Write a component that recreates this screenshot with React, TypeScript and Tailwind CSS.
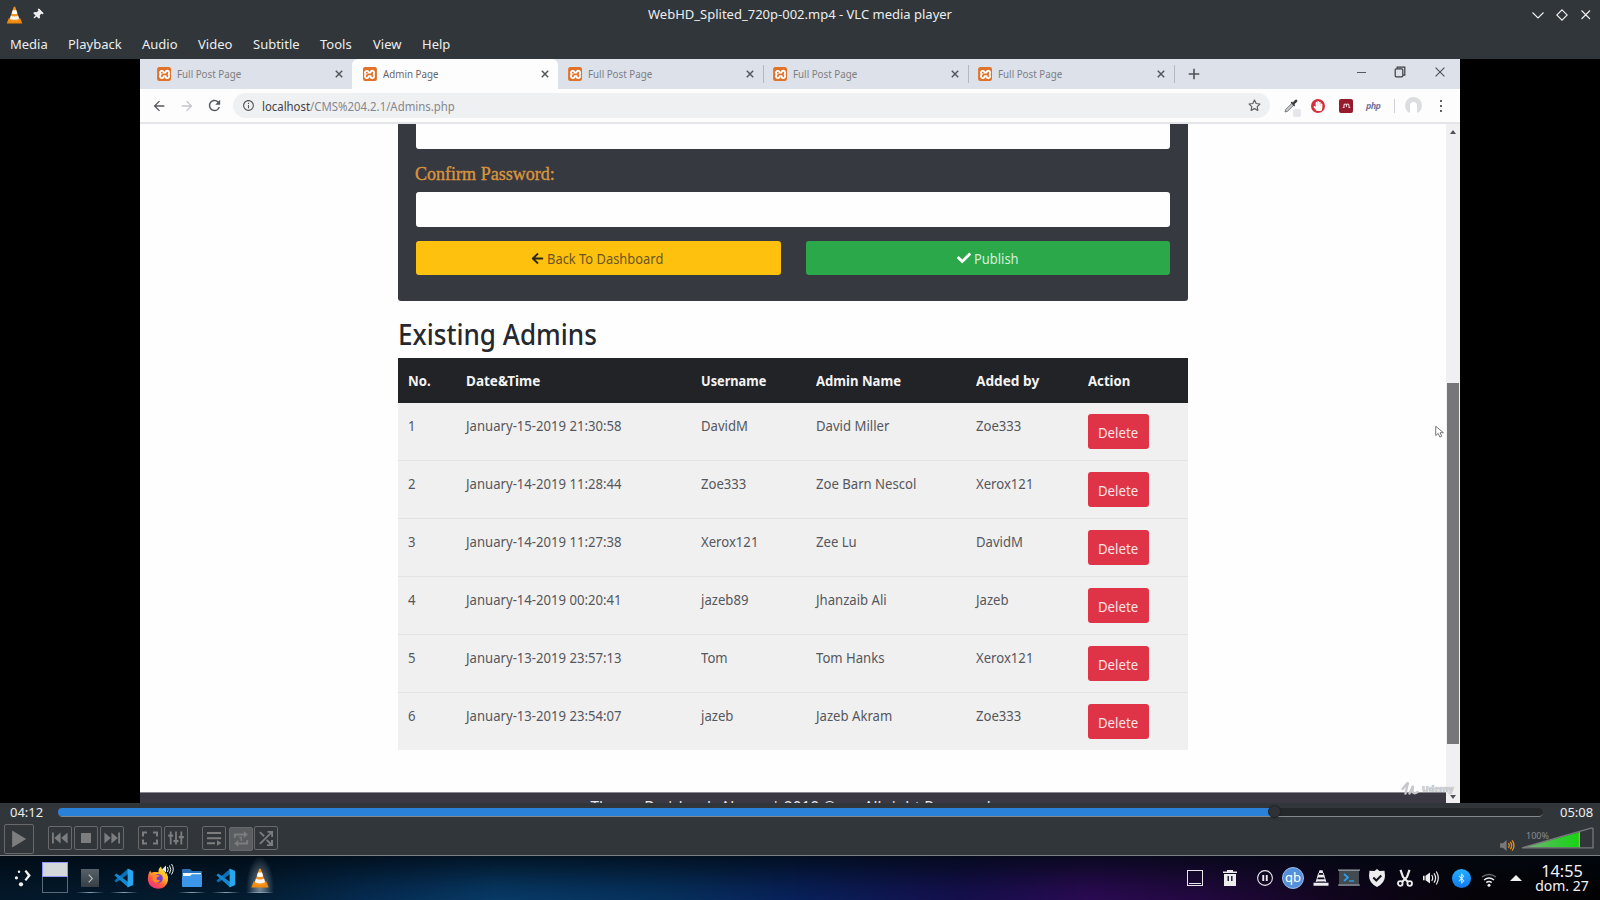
import type { ReactNode } from "react";
import { SiXampp } from "react-icons/si";
import { FaArrowLeft, FaCheck, FaThumbtack, FaBluetoothB, FaHandPaper } from "react-icons/fa";
import { FiStar } from "react-icons/fi";
import { MdRefresh, MdArrowBack, MdArrowForward, MdInfoOutline } from "react-icons/md";

const MENUS = [
  { label: "Media", cls: "w-[58px]" },
  { label: "Playback", cls: "w-[74px]" },
  { label: "Audio", cls: "w-[56px]" },
  { label: "Video", cls: "w-[55px]" },
  { label: "Subtitle", cls: "w-[67px]" },
  { label: "Tools", cls: "w-[53px]" },
  { label: "View", cls: "w-[49px]" },
  { label: "Help", cls: "w-[40px]" },
];

const HEADERS = [
  { label: "No.", cls: "scale-x-[0.94]" },
  { label: "Date&Time", cls: "scale-x-[0.965]" },
  { label: "Username", cls: "scale-x-[0.91]" },
  { label: "Admin Name", cls: "scale-x-[0.935]" },
  { label: "Added by", cls: "scale-x-[0.975]" },
  { label: "Action", cls: "scale-x-[0.94]" },
];

const ROWS = [
  ["1", "January-15-2019 21:30:58", "DavidM", "David Miller", "Zoe333"],
  ["2", "January-14-2019 11:28:44", "Zoe333", "Zoe Barn Nescol", "Xerox121"],
  ["3", "January-14-2019 11:27:38", "Xerox121", "Zee Lu", "DavidM"],
  ["4", "January-14-2019 00:20:41", "jazeb89", "Jhanzaib Ali", "Jazeb"],
  ["5", "January-13-2019 23:57:13", "Tom", "Tom Hanks", "Xerox121"],
  ["6", "January-13-2019 23:54:07", "jazeb", "Jazeb Akram", "Zoe333"],
];

const GRID = "grid grid-cols-[58px_235px_115px_160px_112px_1fr] pl-[9.5px]";

function Cone({ className }: { className: string }) {
  return (
    <svg viewBox="0 0 18 20" className={className}>
      <path d="M2.6 13.5h12.8L17.6 19.5H.4z" fill="#f08a0c" />
      <path d="M8.2.8h1.6l5 15.4c-2.2 1.8-9.4 1.8-11.6 0z" fill="#f7931e" />
      <path d="M7 4.6h4l1.2 3.6c-1.4 1-5 1-6.4 0z" fill="#fff" />
      <path d="M5 10.6c1.8 1.3 6.2 1.3 8 0l1.1 3.5c-2.2 1.7-8 1.7-10.2 0z" fill="#f4f4f4" />
    </svg>
  );
}

function VsCode() {
  return (
    <svg viewBox="0 0 20 20" className="size-[20px]">
      <path d="M.4 12.600L14 .8v5.400L2.200 14.600z" fill="#0b70b8" />
      <path d="M.4 7.200L2.200 5.400 14 13.800v5.400z" fill="#1488d0" />
      <path d="M13.600.5L19.200 3v14l-5.600 2.500z" fill="#2aa6ee" />
    </svg>
  );
}

function Firefox() {
  return (
    <svg viewBox="0 0 22 23" className="h-[23px] w-[22px]">
      <defs>
        <linearGradient id="fx" x1="0.850" y1="0.050" x2="0.250" y2="1">
          <stop offset="0" stopColor="#ffe93c" />
          <stop offset="0.400" stopColor="#ffb01f" />
          <stop offset="0.700" stopColor="#ff5540" />
          <stop offset="1" stopColor="#ea2f8e" />
        </linearGradient>
      </defs>
      <path
        d="M3.200 4.500Q3.500 6 4.600 6.800 6.200 5.600 8 6 9.800 6 11.600 6.200 11 2.800 14 .5 14.300 3.500 17 5q1.200 1 1.800 3l.6-1.500q2.200 4 1.500 8.500-1.800 7.500-10 7.700Q2.200 22.200.9 14.500.400 9 3.200 4.500z"
        fill="url(#fx)"
      />
      <circle cx="11.200" cy="12.500" r="4.600" fill="#7a3fd0" />
      <path d="M5.500 11.500q1.500-3 4.500-2.600 2.500 0 2.800 1-3 .6-3.600 2.400.600 2.600 4 1.700-1 3-4.200 2.700-3.400-.700-3.500-5.200z" fill="#ff8a2a" />
    </svg>
  );
}

function Favicon() {
  return (
    <span className="flex size-[14px] items-center justify-center overflow-hidden rounded-[2px] bg-white">
      <SiXampp className="size-[15px] shrink-0 text-[#e0732c]" />
    </span>
  );
}

function TabX() {
  return (
    <svg viewBox="0 0 8 8" className="size-[8px]">
      <path d="M.8.8l6.4 6.4M7.2.8L.8 7.2" stroke="#54575c" strokeWidth="1.5" />
    </svg>
  );
}

function Tab({ title, active, width, sep }: { title: string; active?: boolean; width: string; sep?: boolean }) {
  return (
    <div className={`flex h-[30px] shrink-0 items-center ${width} ${active ? "rounded-t-[6px] bg-[#fdfdfe]" : ""}`}>
      <Favicon />
      <span className={`ml-[6px] origin-left scale-x-[0.85] whitespace-nowrap text-[11.5px] ${active ? "text-[#65666b]" : "text-[#7c7e85]"}`}>
        {title}
      </span>
      <span className="ml-auto">
        <TabX />
      </span>
      <span className={`h-[18px] w-px ${sep ? "ml-[9px] bg-[#b4b8bf]" : "ml-[8px] bg-transparent"}`} />
    </div>
  );
}

function ChromeTabs() {
  return (
    <div className="flex h-[30px] items-center bg-[#dde1e9]">
      <Tab title="Full Post Page" width="w-[212px] pl-[17px]" />
      <Tab title="Admin Page" active width="w-[206px] pl-[10.5px]" />
      <Tab title="Full Post Page" sep width="w-[206px] pl-[10px]" />
      <Tab title="Full Post Page" sep width="w-[205px] pl-[9px]" />
      <Tab title="Full Post Page" sep width="w-[205.5px] pl-[9px]" />
      <svg viewBox="0 0 12 12" className="ml-[13px] size-[12px]">
        <path d="M6 .7v10.6M.7 6h10.6" stroke="#505357" strokeWidth="1.6" />
      </svg>
      <div className="mb-[4px] ml-auto flex items-center pr-[15px]">
        <span className="h-px w-[9px] bg-[#55585c]" />
        <svg viewBox="0 0 12 12" className="ml-[28px] size-[12px]" fill="none" stroke="#3b3d41" strokeWidth="1.2">
          <rect x="1.2" y="2.8" width="7.6" height="8" rx="1" />
          <path d="M3.2 2.6V1.2h7.6v8H9" />
        </svg>
        <svg viewBox="0 0 10 10" className="ml-[29px] size-[10px]">
          <path d="M.6.6l8.8 8.8M9.4.6L.6 9.4" stroke="#515458" strokeWidth="1.2" />
        </svg>
      </div>
    </div>
  );
}

function AddressBar() {
  return (
    <div className="flex h-[35px] items-center border-b-2 border-[#e4e5e8] bg-[#fdfdfe]">
      <MdArrowBack className="ml-[11px] size-[16px] text-[#55585c]" />
      <MdArrowForward className="ml-[12px] size-[16px] text-[#c2c4c8]" />
      <MdRefresh className="ml-[11px] size-[17px] text-[#55585c]" />
      <div className="ml-[10px] flex h-[25px] w-[1037px] items-center rounded-full bg-[#eff0f2] pl-[9px] pr-[9px]">
        <MdInfoOutline className="size-[13px] text-[#55585c]" />
        <span className="ml-[7px] mt-[2px] origin-left scale-x-[0.875] whitespace-nowrap text-[13px] text-[#85878c]">
          <span className="text-[#3f4145]">localhost</span>/CMS%204.2.1/Admins.php
        </span>
        <FiStar className="ml-auto size-[13px] text-[#606266]" strokeWidth={2.2} />
      </div>
      <div className="relative ml-[14px] mr-px flex">
        <svg viewBox="0 0 14 14" className="size-[14px]">
          <path d="M1 13l.8-2.600L8 4.200 9.800 6 3.600 12.200z" fill="#c9cbcd" stroke="#77797c" strokeWidth="1" />
          <path d="M6.600 3.600L8 2.600l.8.800L11 .9q1.500-.9 2.200.300.600 1-.4 1.900L10.400 5.300l.8.800-1 1.300z" fill="#3c3e41" />
        </svg>
        <span className="absolute left-[9px] top-[10px] size-[8px] rounded-[2px] bg-[#e4e6e9]" />
      </div>
      <span className="ml-[12px] flex size-[14px] items-center justify-center rounded-full bg-[#d4303c]">
        <FaHandPaper className="size-[10px] text-white" />
      </span>
      <span className="ml-[14px] flex size-[14px] items-center justify-center rounded-[2px] bg-[#961b2e]">
        <svg viewBox="0 0 10 6" className="h-[5px] w-[9px]" fill="none" stroke="#f3d9dd" strokeWidth="1.3">
          <path d="M.500 5.500h1.500V3q0-1.800 1.500-1.800T5 3v1.500V3q0-1.800 1.500-1.800T8 3v2.500h1.500" />
        </svg>
      </span>
      <span className="ml-[13px] w-[15px] text-[9px] font-bold italic tracking-[-0.6px] text-[#77749c]">php</span>
      <span className="ml-[13px] h-[14px] w-px bg-[#cfd1d5]" />
      <span className="ml-[10px] flex size-[17px] items-end justify-center rounded-full bg-[#dcdde0]">
        <span className="h-[12px] w-[7px] rounded-t-full bg-white" />
      </span>
      <span className="ml-[18px] flex flex-col gap-[3px]">
        <span className="size-[2px] bg-[#606266]" />
        <span className="size-[2px] bg-[#606266]" />
        <span className="size-[2px] bg-[#606266]" />
      </span>
    </div>
  );
}

function FormCard() {
  return (
    <div className="h-[177px] rounded-b-[3px] bg-[#373941] pl-[17.5px] pr-[18.5px]">
      <div className="h-[25px] rounded-b-[3px] bg-[#fefefe]" />
      <div className="flex h-[43px] items-center pt-[8px] font-['Liberation_Serif',serif] text-[18.5px] font-normal text-[#d8953c] [-webkit-text-stroke:0.4px_#d8953c]">
        <span className="ml-[-0.5px] origin-left scale-x-[0.975] whitespace-nowrap">Confirm Password:</span>
      </div>
      <div className="h-[35px] rounded-[3px] bg-[#fefefe]" />
      <div className="mt-[14px] flex gap-[25px] text-[14.5px]">
        <div className="flex h-[34px] flex-1 items-center justify-center gap-[3px] rounded-[3px] bg-[#fec10d] pr-[2px] text-[#6b5524]">
          <FaArrowLeft className="size-[13px] text-[#2a2718]" />
          <span className="mt-[2px] w-[116px] origin-left scale-x-[0.89] whitespace-nowrap">Back To Dashboard</span>
        </div>
        <div className="flex h-[34px] flex-1 items-center justify-center gap-[3px] rounded-[3px] bg-[#2aa84a] text-[#d5f0db]">
          <FaCheck className="size-[14px] text-white" />
          <span className="mt-[2px] w-[44px] origin-left scale-x-[0.89] whitespace-nowrap">Publish</span>
        </div>
      </div>
    </div>
  );
}

function AdminTable() {
  return (
    <div>
      <div className={`${GRID} h-[45px] items-center bg-[#212327] text-[14px] font-bold text-[#f3f3f4]`}>
        {HEADERS.map((h) => (
          <span key={h.label} className={`origin-left whitespace-nowrap ${h.cls}`}>
            {h.label}
          </span>
        ))}
      </div>
      {ROWS.map((r) => (
        <div
          key={r[0]}
          className={`${GRID} h-[58px] items-start border-b border-[#e2e3e5] bg-[#f0f0f1] pt-[11px] text-[14.500px] leading-[22px] text-[#55575c] last:h-[57px] last:border-transparent`}
        >
          {r.map((c, i) => (
            <span key={i} className="origin-left scale-x-[0.905] whitespace-nowrap">
              {c}
            </span>
          ))}
          <span className="flex h-[35px] w-[61px] items-center justify-center rounded-[3px] bg-[#df3447] text-[#fde3e6]">
            <span className="scale-x-[0.91]">Delete</span>
          </span>
        </div>
      ))}
    </div>
  );
}

function VideoFrame() {
  return (
    <div className="flex h-[744px] justify-center overflow-hidden bg-black">
      <div className="relative flex w-[1320px] flex-col overflow-hidden bg-[#fefefe]">
        <ChromeTabs />
        <AddressBar />
        <div className="flex min-h-0 flex-1">
          <div className="flex flex-1 flex-col">
            <div className="ml-[258px] w-[790px]">
              <FormCard />
              <h1 className="flex h-[57px] items-center pt-[9px] text-[28px] font-medium text-[#26282d]">
                <span className="ml-[-0.5px] origin-left scale-x-[0.932] whitespace-nowrap">Existing Admins</span>
              </h1>
              <AdminTable />
            </div>
            <div className="mt-auto flex h-[11px] justify-center overflow-hidden border-t border-[#888890] bg-[#3a3842] text-[16px] leading-[22px] text-[#e8e8ec]">
              <span className="mt-[3px] scale-x-[0.96] whitespace-nowrap">Theme By | Jazeb Akram | 2019 © ---- All right Reserved.</span>
            </div>
          </div>
          <div className="flex w-[14px] flex-col items-center bg-[#f0f0f2]">
            <span className="mt-[6px] border-x-[3px] border-b-[4px] border-x-transparent border-b-[#505256]" />
            <span className="mt-[249px] h-[361px] w-[12px] bg-[#77777a]" />
            <span className="mb-[4px] mt-auto border-x-[3px] border-t-[4px] border-x-transparent border-t-[#505256]" />
          </div>
        </div>
        <svg viewBox="0 0 14 18" className="absolute left-[1295px] top-[366px] h-[14px] w-[10px]">
          <path d="M1 1v13l3.400-3 2.400 5 2.600-1.200-2.300-4.800h4.700z" fill="#fff" stroke="#6a6b6f" strokeWidth="1.300" />
        </svg>
        <div className="absolute left-[1261px] top-[720px] flex items-center gap-[3px] text-[9.500px] font-bold leading-[16px] text-[#d9d9dc] [text-shadow:0_0_1px_#77777c]">
          <svg viewBox="0 0 18 14" className="h-[14px] w-[18px]" fill="none" stroke="#c8c8cc" strokeWidth="2.400" strokeLinecap="round">
            <path d="M1.500 8L7 1.500 4.500 12.500M8.500 12.500L12 5l-.500 6q1.500 2.500 5 0" />
          </svg>
          <span className="mt-[2px] origin-left scale-x-[0.94]">Udemy</span>
        </div>
      </div>
    </div>
  );
}

function Ctl({ children, cls = "", big }: { children: ReactNode; cls?: string; big?: boolean }) {
  return (
    <span className={`flex items-center justify-center rounded-[2px] border border-[#67696b] text-[#7b7d7e] ${big ? "size-[30px]" : "size-[24px]"} ${cls}`}>
      <svg viewBox="0 0 16 16" className={big ? "size-[20px]" : "size-[16px]"} fill="currentColor">
        {children}
      </svg>
    </span>
  );
}

function Player() {
  return (
    <div className="flex h-[53px] flex-col border-b border-[#7b8083] bg-[#31363a]">
      <div className="flex h-[18px] items-center">
        <span className="w-[58px] pl-[10px] text-[13px] leading-none text-[#eceeef]">04:12</span>
        <div className="relative h-[9px] w-[1485px] rounded-full border-b border-[#85898b] bg-[#25282b]">
          <div className="h-[8px] w-[1217px] rounded-l-full bg-[#2a82d8]" />
          <span className="absolute left-[1210px] top-[-3px] size-[13px] rounded-full border border-[#202326] bg-[#2e3236] shadow" />
        </div>
        <span className="ml-[17px] text-[13px] leading-none text-[#eceeef]">05:08</span>
      </div>
      <div className="flex h-[34px] items-center pl-[4px]">
        <Ctl big cls="mt-[2px]">
          <path d="M2.500 1.200v13.600L13.800 8z" />
        </Ctl>
        <Ctl cls="ml-[14px]">
          <path d="M0 2.500h1.800v11H0zM8.600 2.500v11L2.200 8zM15.600 2.500v11L9.200 8z" />
        </Ctl>
        <Ctl cls="ml-[2px]">
          <path d="M3 3h10v10H3z" />
        </Ctl>
        <Ctl cls="ml-[2px]">
          <path d="M14.200 2.500H16v11h-1.800zM7.400 2.500v11L13.800 8zM.4 2.500v11L6.800 8z" />
        </Ctl>
        <Ctl cls="ml-[14px]">
          <path d="M0 1.500h5v2H2v3H0zM16 1.500h-5v2h3v3h2zM0 14.500h5v-2H2v-3H0zM16 14.500h-5v-2h3v-3h2z" />
        </Ctl>
        <Ctl cls="ml-[2px]">
          <path d="M1.800 1.500h1.800v13H1.800zM7.100 1.500h1.800v13H7.100zM12.400 1.500h1.800v13h-1.800zM.2 4.500h5v2.200h-5zM5.500 10h5v2.200h-5zM10.800 6h5v2.200h-5z" />
        </Ctl>
        <Ctl cls="ml-[14px]">
          <path d="M1 2h14v2H1zM1 7.200h14v2H1zM1 12.300h8v2H1zM11 10.200v5.600l4.500-2.800z" />
        </Ctl>
        <Ctl cls="ml-[3px] mt-[2px] bg-[#5a5d60]">
          <path d="M.8 6.800V2.600h10V0l4 3.500-4 3.500V4.600h-8v2.200zM15.200 9.200v4.200h-10V16l-4-3.500 4-3.500v2.400h8V9.200zM6.300 5.800h2.600V10H7.600V7.200H6.300z" />
        </Ctl>
        <Ctl cls="ml-[1px]">
          <path d="M1.200 2.700l1.300-1.300L6.800 5.600 5.500 7zM9.300 9.200L13 12.800V10h2v6H9v-1.800h2.600L8 10.600zM1.200 13.300L12 2.700H9.500V1H15v6h-1.800V4L2.500 14.600z" />
        </Ctl>
        <svg viewBox="0 0 16 14" className="ml-auto mt-[14px] h-[13px] w-[15px]">
          <path d="M0 4.500h3L7 1v12L3 9.500H0z" fill="#77797a" />
          <path d="M9 4.500q1.800 2.500 0 5M11 3q3 4 0 8M13 1.500q4 5.500 0 11" fill="none" stroke="#e88b1c" strokeWidth="1.400" />
        </svg>
        <div className="relative ml-[6px] mr-[6px] h-[22px] w-[73px]">
          <svg viewBox="0 0 73 22" className="h-[22px] w-[73px]">
            <defs>
              <linearGradient id="vol">
                <stop offset="0" stopColor="#7fae7f" />
                <stop offset="0.600" stopColor="#35c935" />
                <stop offset="1" stopColor="#14d514" />
              </linearGradient>
            </defs>
            <path d="M2 20.500L59 5v15.500z" fill="url(#vol)" />
            <path d="M57.800 5.200L59 5v15.500h-1.200z" fill="#a5c313" />
            <path d="M1 20.800L70 1.200q2-.5 2 1v18.600z" fill="none" stroke="#77797a" strokeWidth="1.300" />
          </svg>
          <span className="absolute left-[5px] top-[2px] text-[9px] leading-[14px] text-[#8b8e90]">100%</span>
        </div>
      </div>
    </div>
  );
}

function Task({ children, cls, line = true }: { children: ReactNode; cls: string; line?: boolean }) {
  return (
    <span className={`flex h-[37px] flex-col items-center justify-end ${cls}`}>
      <span className="flex h-[24px] items-center">{children}</span>
      <span className={`mt-[2px] h-px w-full bg-gradient-to-r from-transparent to-transparent ${line ? "via-[#8ba3b5]" : ""}`} />
    </span>
  );
}

function Taskbar() {
  return (
    <div className="flex h-[44px] items-start bg-[linear-gradient(to_bottom,rgba(0,8,16,0.75),rgba(0,8,16,0.15)_70%,transparent),linear-gradient(to_right,#03182a_0%,#031c30_15%,#052b50_23%,#073a66_31%,#06305c_42%,#08205a_50%,#140f4c_60%,#2a0a52_68%,#22083f_75%,#10051c_84%,#060308_92%,#020203)] text-[#f4f4f5]">
      <svg viewBox="0 0 18 18" className="ml-[14px] mt-[13px] size-[18px]" fill="#f2f2f2">
        <circle cx="5" cy="2.800" r="1.200" />
        <circle cx="2.400" cy="8.800" r="1.600" />
        <circle cx="7" cy="15.300" r="2.100" />
        <path d="M10.500 2.300L12.300 1l4.500 5.600-4.600 5.500-1.700-1.300 3.200-4.200z" />
      </svg>
      <div className="ml-[10px] mt-[6px] flex h-[31px] w-[26px] flex-col border border-[#5a6a78]">
        <span className="-mx-px -mt-px h-[15px] border border-[#8f96ff] bg-[#d5d8da]" />
      </div>
      <Task cls="ml-[8px] w-[28px]">
        <span className="flex size-[18px] items-center justify-center bg-gradient-to-b from-[#566068] to-[#384046]">
          <svg viewBox="0 0 10 10" className="size-[9px]" fill="none" stroke="#c5cacc" strokeWidth="1.200">
            <path d="M3 .8L7 5 3 9.200" />
          </svg>
        </span>
      </Task>
      <Task cls="ml-[6px] w-[28px]">
        <VsCode />
      </Task>
      <Task cls="ml-[6px] w-[28px]" line={false}>
        <span className="relative mb-[2px] mr-px flex">
          <Firefox />
          <svg viewBox="0 0 12 12" className="absolute left-[15px] top-[-3px] size-[12px]">
            <path d="M0 6.500L4 2.500v7z" fill="#eee" />
            <path d="M5.500 4q1.500 2.500 0 5M7.500 2.500q2.500 4 0 8M9.500 1q3.500 5 0 10.500" fill="none" stroke="#eee" strokeWidth="1" />
          </svg>
        </span>
      </Task>
      <Task cls="ml-[6px] w-[28px]">
        <svg viewBox="0 0 20 18" className="h-[18px] w-[20px]">
          <path d="M0 1q0-1 1-1h7l2 2h9q1 0 1 1v5H0z" fill="#2670b8" />
          <path d="M1 4h18v4H1z" fill="#f2f5f8" />
          <path d="M0 7h8l2-1.800h10V17q0 1-1 1H1q-1 0-1-1z" fill="#3c96ea" />
        </svg>
      </Task>
      <Task cls="ml-[6px] w-[28px]">
        <VsCode />
      </Task>
      <Task cls="ml-[6px] w-[28px] bg-[radial-gradient(ellipse_at_50%_85%,rgba(200,210,220,0.6),transparent_70%)]">
        <Cone className="h-[20px] w-[18px]" />
      </Task>

      <div className="ml-auto flex h-[44px] items-center">
        <span className="flex size-[16px] flex-col justify-end border border-[#e8e8ea] p-px">
          <span className="h-px bg-[#e8e8ea]" />
        </span>
        <svg viewBox="0 0 14 16" className="ml-[20px] h-[16px] w-[14px]" fill="#ededee">
          <path d="M4 1.500V0h6v1.500h4V3H0V1.500zM1 4h12v12H1zM4.500 6v5h1.400V6zM8.100 6v5h1.400V6z" fillRule="evenodd" />
        </svg>
        <svg viewBox="0 0 16 16" className="ml-[20px] size-[16px]">
          <circle cx="8" cy="8" r="7.400" fill="none" stroke="#ededee" strokeWidth="1.100" />
          <path d="M5.300 5h1.900v6H5.300zM8.800 5h1.900v6H8.800z" fill="#ededee" />
        </svg>
        <span className="ml-[9px] flex size-[22px] items-center justify-center rounded-full border border-[#9dbdec] bg-[#5490dc] pb-[2px] text-[13px] leading-none text-white">qb</span>
        <svg viewBox="0 0 16 16" className="ml-[9px] size-[16px]" fill="#ededee">
          <path d="M6.500.3h3l.8 2.700H5.700zM5.200 4.800h5.600l.8 2.600H4.400zM3.900 9.300h8.200l.6 2.200H3.300zM2.800 12.800h10.400l2.300 0v3H.5v-3z" />
          <path d="M5.700 3L3.200 12M10.300 3l2.500 9" stroke="#ededee" strokeWidth=".9" />
        </svg>
        <svg viewBox="0 0 22 18" className="ml-[9px] h-[18px] w-[22px]">
          <path d="M1 1h20v16H1z" fill="#434b52" />
          <path d="M0 .5h22v1.300H0zM0 15.500h22v1H0z" fill="#a0a6aa" />
          <path d="M6 5l4 3.500L6 12" fill="none" stroke="#2da0e8" strokeWidth="1.700" />
          <path d="M11 12h5" stroke="#2da0e8" strokeWidth="1.400" />
        </svg>
        <svg viewBox="0 0 18 18" className="ml-[8px] size-[18px]">
          <path d="M9 0l2.500 2 5-.2.500 5Q17 14 9 18 1 14 1 6.800l.5-5 5 .2z" fill="#ededee" />
          <path d="M5.300 8.500l3 3 5-5" fill="none" stroke="#17121c" strokeWidth="2" />
        </svg>
        <svg viewBox="0 0 16 18" className="ml-[11px] h-[18px] w-[16px]" fill="none" stroke="#ededee" strokeWidth="1.800">
          <path d="M3.500.8L6 8l5 5M12.500.8L10 8l-5 5" strokeWidth="2.200" />
          <circle cx="3.300" cy="14.500" r="2.300" />
          <circle cx="12.700" cy="14.500" r="2.300" />
        </svg>
        <svg viewBox="0 0 16 16" className="ml-[10px] size-[16px]">
          <path d="M0 5.800h1.600v4.400H0zM2.500 5.800L7 2.500v11l-4.500-3.300z" fill="#ededee" />
          <path d="M8.700 5q2 3 0 6M11 3.300q3.200 4.700 0 9.400M13.300 1.500q4 6.500 0 13" fill="none" stroke="#ededee" strokeWidth="1.200" />
        </svg>
        <span className="ml-[13px] flex size-[19px] items-center justify-center rounded-full bg-gradient-to-b from-[#25b0ff] to-[#1379ee]">
          <FaBluetoothB className="size-[11px] text-[#d8f0ff]" />
        </span>
        <svg viewBox="0 0 16 14" className="ml-[10px] mt-[3px] h-[14px] w-[16px]" fill="none" strokeWidth="1.500">
          <path d="M1 4q7-5 14 0" stroke="#6c6c70" />
          <path d="M3 7q5-3.800 10 0M5.300 9.600q2.700-2 5.400 0" stroke="#ededee" />
          <circle cx="8" cy="12.300" r="1.500" fill="#ededee" />
        </svg>
        <span className="ml-[13px] border-x-[6px] border-b-[6px] border-x-transparent border-b-[#f2f2f2]" />
        <div className="ml-[13px] mr-[11px] mt-px flex w-[54px] flex-col items-center">
          <span className="text-[16.300px] leading-[15px]">14:55</span>
          <span className="whitespace-nowrap text-[14px] leading-[14px]">dom. 27</span>
        </div>
      </div>
    </div>
  );
}

export default function App() {
  return (
    <div className="flex h-[900px] w-[1600px] flex-col overflow-hidden bg-[#31363a] font-['Noto_Sans',sans-serif]">
      <div className="grid h-[29px] grid-cols-[1fr_auto_1fr] items-center text-[13px] text-[#eceeef]">
        <div className="flex items-center pl-[6px]">
          <Cone className="h-[18px] w-[17px]" />
          <FaThumbtack className="ml-[9px] size-[11px] rotate-45" />
        </div>
        <span>WebHD_Splited_720p-002.mp4 - VLC media player</span>
        <svg viewBox="0 0 60 12" className="mr-[8px] h-[12px] w-[60px] justify-self-end" fill="none" stroke="#f0f0f0" strokeWidth="1.100">
          <path d="M.5 3.500L6 9l5.500-5.500M30 .8L35.200 6 30 11.200 24.800 6zM49.500 1.500l8.500 8.500M58 1.500L49.500 10" />
        </svg>
      </div>
      <div className="flex h-[30px] items-center pl-[10px] pt-[2px] text-[13px] text-[#eceeef]">
        {MENUS.map((m) => (
          <span key={m.label} className={`shrink-0 ${m.cls}`}>
            {m.label}
          </span>
        ))}
      </div>
      <VideoFrame />
      <Player />
      <Taskbar />
    </div>
  );
}
